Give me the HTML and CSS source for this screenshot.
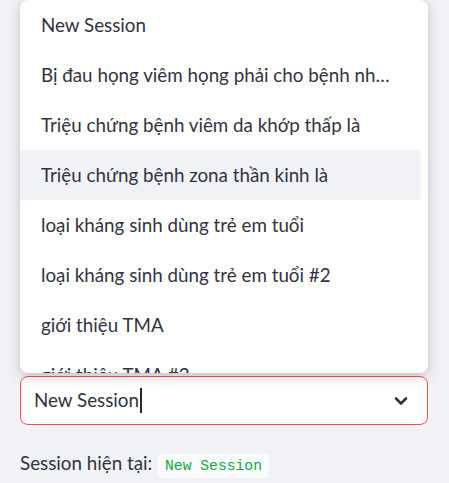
FILE: index.html
```html
<!DOCTYPE html>
<html lang="vi">
<head>
<meta charset="utf-8">
<link rel="stylesheet" href="styles.css">
</head>
<body>
<div class="page">
  <div class="select-wrap">
    <ul class="menu">
      <li class="opt">New Session</li>
      <li class="opt">Bị đau họng viêm họng phải cho bệnh nh…</li>
      <li class="opt">Triệu chứng bệnh viêm da khớp thấp là</li>
      <li class="opt active">Triệu chứng bệnh zona thần kinh là</li>
      <li class="opt">loại kháng sinh dùng trẻ em tuổi</li>
      <li class="opt">loại kháng sinh dùng trẻ em tuổi #2</li>
      <li class="opt">giới thiệu TMA</li>
      <li class="opt">giới thiệu TMA #2</li>
    </ul>
    <div class="select">
      <span class="value">New Session</span><span class="caret"></span>
      <svg class="chev" width="14" height="10" viewBox="0 0 14 10"><path d="M2 2.5 L7 7.5 L12 2.5" fill="none" stroke="#31333f" stroke-width="2.6" stroke-linecap="round" stroke-linejoin="round"/></svg>
    </div>
  </div>
  <p class="current">Session hiện tại: <code class="code">New Session</code></p>
</div>
</body>
</html>
```
FILE: styles.css
```css
html, body {
  margin: 0;
  padding: 0;
  background: #f0f2f6;
}
body {
  font-family: Lato, "Noto Sans", sans-serif;
  color: #31333f;
  font-size: 18.8px;
}
.page {
  width: 408px;
  padding: 376px 0 0 20px;
}
.select-wrap {
  position: relative;
}
.menu {
  position: absolute;
  left: 0;
  right: 0;
  bottom: calc(100% + 3px);
  height: 373px;
  margin: 0;
  padding: 0 7px 0 0;
  list-style: none;
  background: #fff;
  border-radius: 8px;
  overflow: hidden;
  box-shadow: 0 4px 14px rgba(0, 0, 0, 0.18), 0 0 4px rgba(0, 0, 0, 0.06);
  z-index: 2;
}
.opt {
  height: 50px;
  line-height: 50px;
  padding-left: 21px;
  white-space: nowrap;
}
.opt.active {
  background: #f0f2f6;
}
.select {
  height: 47px;
  border: 1px solid #ff4b4b;
  border-radius: 8px;
  background: #fff;
  display: flex;
  align-items: center;
  padding: 0 19px 0 13px;
}
.value {
  line-height: 1;
}
.caret {
  width: 2px;
  height: 25px;
  background: #262730;
  margin-left: 1px;
}
.chev {
  margin-left: auto;
}
.current {
  margin: 23px 0 0;
  line-height: 30px;
}
.code {
  font-family: "Liberation Mono", "DejaVu Sans Mono", monospace;
  font-size: 14.7px;
  color: #09ab3b;
  background: #fafbfc;
  border-radius: 4px;
  padding: 4px 7px;
  margin-left: 1px;
}
```
